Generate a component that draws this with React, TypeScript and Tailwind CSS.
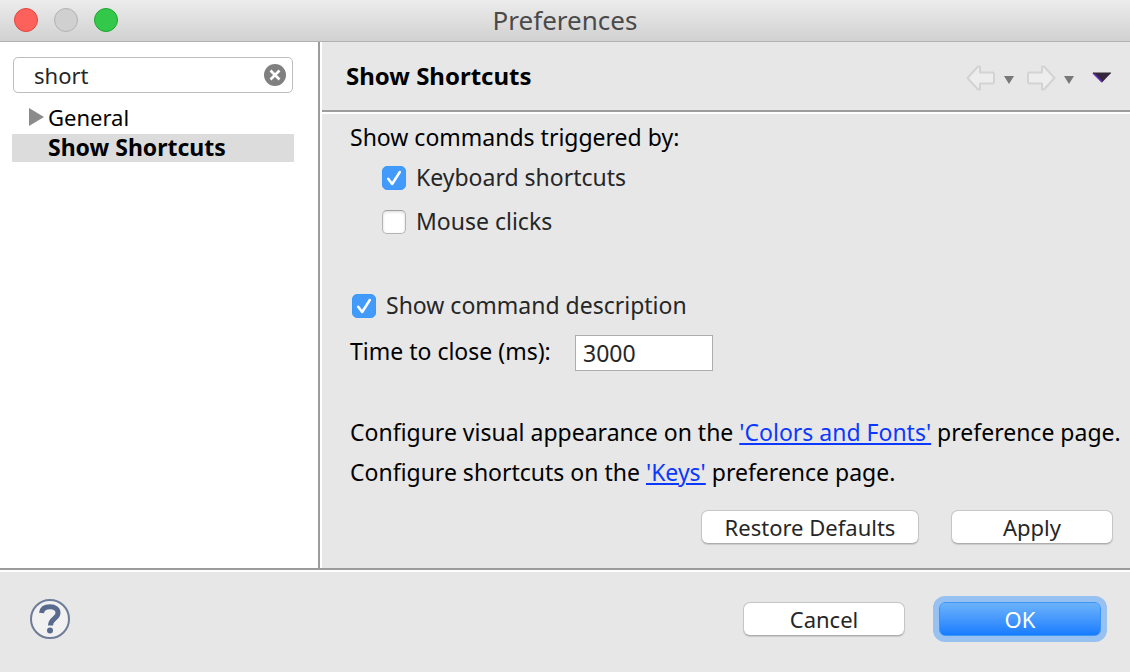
import { useId, useState } from "react";
import type { ReactNode } from "react";

function CheckRow({ label, initial }: { label: string; initial: boolean }) {
  const [checked, setChecked] = useState(initial);
  return (
    <label className="flex items-center gap-2.5 text-[#262626]">
      <span className="grid h-6 w-6 place-items-center">
        <input
          type="checkbox"
          checked={checked}
          onChange={(e) => setChecked(e.target.checked)}
          className="peer col-start-1 row-start-1 h-6 w-6 appearance-none rounded-[5px] border border-[#b4b4b4] border-t-[#a0a0a0] bg-white shadow-[inset_0_1px_3px_#d8d8d8] checked:border-[#3b99fc] checked:bg-[#429bfb] checked:shadow-none"
        />
        <svg
          viewBox="0 0 24 24"
          className="pointer-events-none invisible col-start-1 row-start-1 h-6 w-6 peer-checked:visible"
          aria-hidden="true"
        >
          <path
            d="M6.2 12.8 10.2 18 17.8 6"
            fill="none"
            stroke="white"
            strokeWidth="2.5"
            strokeLinecap="round"
            strokeLinejoin="round"
          />
        </svg>
      </span>
      <span className="pb-0.5">{label}</span>
    </label>
  );
}

function PushButton({ children, wide = false }: { children: ReactNode; wide?: boolean }) {
  return (
    <button
      type="button"
      className={`flex h-[34px] items-center justify-center rounded-[7px] border border-[#c6c6c6] border-b-[#adadad] bg-white text-[#262626] shadow-[0_1px_1px_#c9c9c9] ${
        wide ? "w-[218px]" : "w-[162px]"
      }`}
    >
      {children}
    </button>
  );
}

function HistoryButton({ direction }: { direction: "Back" | "Forward" }) {
  return (
    <button type="button" aria-label={direction} className="flex items-center gap-2">
      <svg viewBox="0 0 30 26" className="h-[26px] w-[30px]" aria-hidden="true">
        <path
          d={
            direction === "Back"
              ? "M1.5 13 12 1.5H14V7.5H27L28 8.5V17.5L27 18.5H14V24.5H12Z"
              : "M28.5 13 18 1.5H16V7.5H3L2 8.5V17.5L3 18.5H16V24.5H18Z"
          }
          fill="#ededed"
          stroke="#d3d3d3"
          strokeWidth="2"
          strokeLinejoin="round"
        />
      </svg>
      <svg viewBox="0 0 10 8" className="mt-1 h-2 w-2.5" aria-hidden="true">
        <path d="M0 0H10L5 8Z" fill="#767976" />
      </svg>
    </button>
  );
}

export default function App() {
  const timeId = useId();
  const [query, setQuery] = useState("short");
  const [time, setTime] = useState("3000");

  return (
    <div className="flex min-h-screen flex-col bg-[#e7e7e7] font-['Noto_Sans',sans-serif] text-[22px] leading-7 text-black">
      <header className="grid h-[42px] grid-cols-[1fr_auto_1fr] items-center border-b border-[#b1b1b1] bg-linear-to-b from-[#ececec] to-[#d1d1d1] px-3.5 pb-0.5">
        <div className="flex gap-4">
          <button type="button" aria-label="Close" className="h-6 w-6 rounded-full border border-[#e2463f] bg-[#fc615c]" />
          <button type="button" aria-label="Minimize" className="h-6 w-6 rounded-full border border-[#b2b2b2] bg-[#d0d0d0]" />
          <button type="button" aria-label="Zoom" className="h-6 w-6 rounded-full border border-[#1fa431] bg-[#34c84a]" />
        </div>
        <h1 className="text-[26px] text-[#4a4a4a]">Preferences</h1>
      </header>

      <div className="flex flex-1 border-b-2 border-[#9c9c9c]">
        <aside className="w-80 shrink-0 border-r-2 border-[#9c9c9c] bg-white pt-[15px] pr-6 pl-3">
          <div className="mr-px ml-px flex h-9 items-center rounded-[5px] border border-[#bdbdbd] pr-1.5 pl-5">
            <input
              type="text"
              aria-label="Filter preferences"
              value={query}
              onChange={(e) => setQuery(e.target.value)}
              className="h-7 min-w-0 flex-1 bg-transparent text-[#262626] outline-none"
            />
            <button type="button" aria-label="Clear filter" onClick={() => setQuery("")}>
              <svg viewBox="0 0 22 22" className="h-[22px] w-[22px]" aria-hidden="true">
                <circle cx="11" cy="11" r="11" fill="#808080" />
                <path d="M6.5 6.5 15.5 15.5M15.5 6.5 6.5 15.5" stroke="white" strokeWidth="2.6" />
              </svg>
            </button>
          </div>
          <ul className="mt-2.5">
            <li className="flex h-[31px] items-center pb-1 pl-[17px]">
              <button type="button" className="flex items-center gap-1">
                <svg viewBox="0 0 15 18" className="h-[18px] w-[15px]" aria-hidden="true">
                  <path d="M0 0 15 9 0 18Z" fill="#8b8b8b" />
                </svg>
                General
              </button>
            </li>
            <li className="flex h-7 items-center bg-[#dcdcdc] pb-0.5 pl-9 text-[23px] font-bold">Show Shortcuts</li>
          </ul>
        </aside>

        <main className="min-w-0 flex-1 border-l-2 border-white text-[23px]">
          <div className="flex h-[70px] items-center justify-between border-b-2 border-[#9c9c9c] pr-[18px] pl-6">
            <h2 className="text-2xl font-bold">Show Shortcuts</h2>
            <div className="flex items-center gap-3 pt-[3px]">
              <HistoryButton direction="Back" />
              <HistoryButton direction="Forward" />
              <button type="button" aria-label="View menu" className="ml-1.5">
                <svg viewBox="0 0 20 11" className="h-[11px] w-5" aria-hidden="true">
                  <path d="M1 1H19L10 10.5Z" fill="#35253f" />
                  <path d="M1 1 10 10" stroke="#6630bd" strokeWidth="1.6" />
                  <path d="M1 1H19" stroke="#302c30" strokeWidth="1" />
                </svg>
              </button>
            </div>
          </div>

          <div className="border-t-2 border-white pt-1 pr-[17px] pb-6 pl-7">
            <fieldset>
              <legend className="flex h-10 items-center pb-0.5">Show commands triggered by:</legend>
              <div className="flex h-10 items-center pl-8">
                <CheckRow label="Keyboard shortcuts" initial={true} />
              </div>
              <div className="flex h-12 items-center pl-8">
                <CheckRow label="Mouse clicks" initial={false} />
              </div>
            </fieldset>
            <div className="mt-10 flex h-10 items-center pl-0.5">
              <CheckRow label="Show command description" initial={true} />
            </div>
            <div className="flex h-[54px] items-center">
              <label htmlFor={timeId} className="w-[225px] pb-1">
                Time to close (ms):
              </label>
              <input
                id={timeId}
                type="text"
                value={time}
                onChange={(e) => setTime(e.target.value)}
                className="h-9 w-[138px] border border-[#adadad] bg-white px-[7px] text-[#262626] outline-none"
              />
            </div>
            <div className="mt-8 mb-4 leading-10 whitespace-nowrap">
              <p>
                Configure visual appearance on the{" "}
                <a href="#colors-and-fonts" className="text-[#0b39ff] underline decoration-2 underline-offset-2">
                  'Colors and Fonts'
                </a>{" "}
                preference page.
              </p>
              <p>
                Configure shortcuts on the{" "}
                <a href="#keys" className="text-[#0b39ff] underline decoration-2 underline-offset-2">
                  'Keys'
                </a>{" "}
                preference page.
              </p>
            </div>
            <div className="flex justify-end gap-8 pt-0.5 text-[22px]">
              <PushButton wide>Restore Defaults</PushButton>
              <PushButton>Apply</PushButton>
            </div>
          </div>
        </main>
      </div>

      <footer className="flex h-[102px] items-center justify-between border-t-2 border-white pr-[29px] pb-1.5 pl-[29px]">
        <button type="button" aria-label="Help">
          <svg viewBox="0 0 42 42" className="h-[42px] w-[42px]" aria-hidden="true">
            <circle cx="21" cy="21" r="19" fill="#f1f1f1" stroke="#6d7c98" strokeWidth="2" />
            <path
              d="M12.5 15C13 10.5 16.5 8.8 21 8.8C26 8.8 29 11.2 29 15C29 20.5 21.5 20.5 21.5 27.5"
              fill="none"
              stroke="#586b8e"
              strokeWidth="5"
            />
            <circle cx="21" cy="32.5" r="3" fill="#586b8e" />
          </svg>
        </button>
        <div className="flex items-center gap-[34px]">
          <PushButton>Cancel</PushButton>
          <button
            type="button"
            className="flex h-[34px] w-[162px] items-center justify-center rounded-[6px] border border-[#3d96f5] bg-linear-to-b from-[#6bb2fa] to-[#147cff] text-white ring-[6px] ring-[#97c1f0]"
          >
            OK
          </button>
        </div>
      </footer>
    </div>
  );
}
